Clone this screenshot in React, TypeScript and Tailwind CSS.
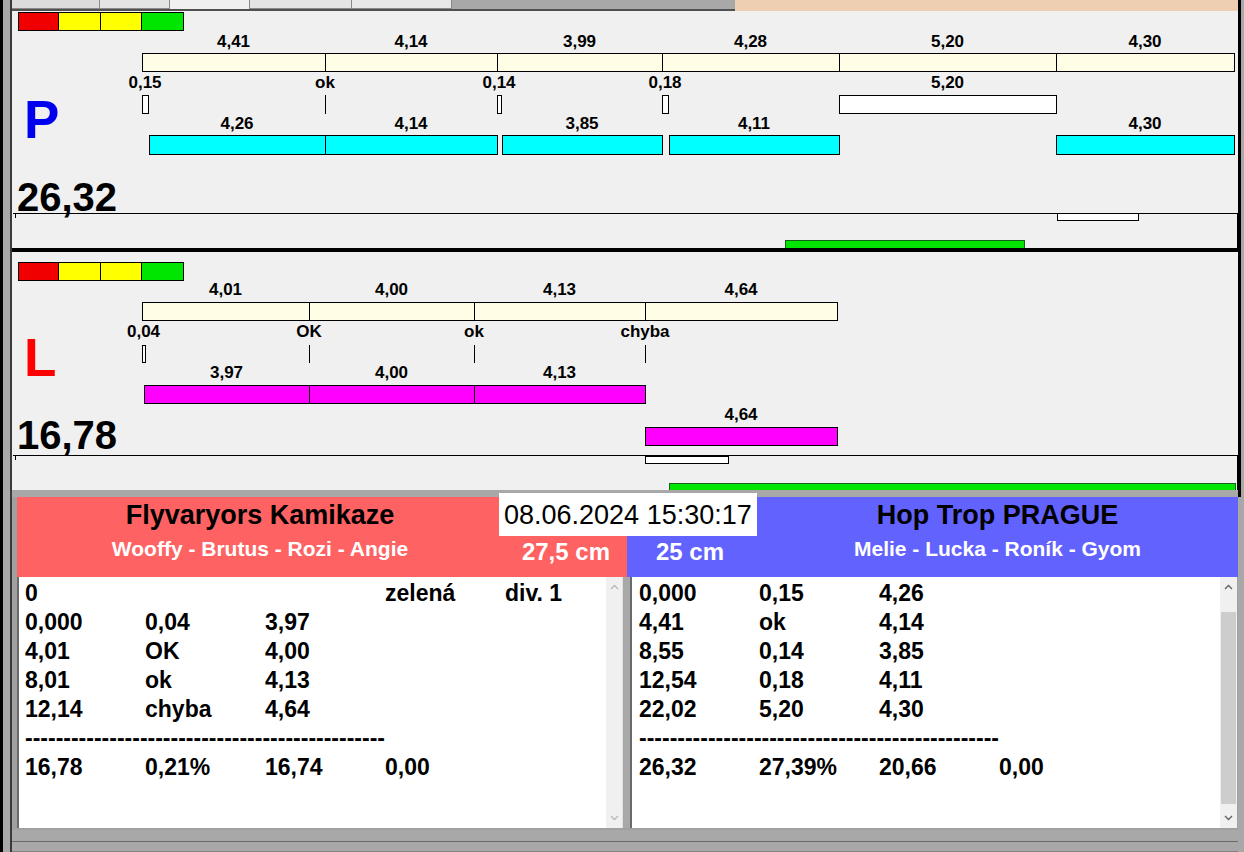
import React from 'react'

const OX = 12

type Mark = { x: number; w: number; label: string }
type Bar = { a: number; b: number; y: number; h: number; labelTop: number; label: string }
type Panel = {
  top: number
  height: number
  letter: string
  letterClass: string
  letterTop: number
  total: string
  totalTop: number
  lightTop: number
  base: { y: number; h: number; labelTop: number; cuts: number[]; labels: string[] }
  marks: { y: number; h: number; labelTop: number; items: Mark[] }
  bars: Bar[]
  barClass: string
  lineY: number
  white: [number, number, number]
  green: [number, number, number]
}

const panelP: Panel = {
  top: 11,
  height: 237,
  letter: 'P',
  letterClass: 'text-[#0000ee]',
  letterTop: 93,
  total: '26,32',
  totalTop: 177,
  lightTop: 12,
  base: {
    y: 53,
    h: 19,
    labelTop: 33,
    cuts: [142, 325, 497, 662, 839, 1056, 1234],
    labels: ['4,41', '4,14', '3,99', '4,28', '5,20', '4,30'],
  },
  marks: {
    y: 95,
    h: 19,
    labelTop: 74,
    items: [
      { x: 142, w: 6, label: '0,15' },
      { x: 325, w: 0, label: 'ok' },
      { x: 497, w: 4, label: '0,14' },
      { x: 662, w: 6, label: '0,18' },
      { x: 839, w: 217, label: '5,20' },
    ],
  },
  bars: [
    { a: 149, b: 325, y: 135, h: 20, labelTop: 115, label: '4,26' },
    { a: 325, b: 497, y: 135, h: 20, labelTop: 115, label: '4,14' },
    { a: 502, b: 662, y: 135, h: 20, labelTop: 115, label: '3,85' },
    { a: 669, b: 839, y: 135, h: 20, labelTop: 115, label: '4,11' },
    { a: 1056, b: 1234, y: 135, h: 20, labelTop: 115, label: '4,30' },
  ],
  barClass: 'bg-[#00ffff]',
  lineY: 213,
  white: [1057, 1139, 213],
  green: [785, 1025, 240],
}

const panelL: Panel = {
  top: 252,
  height: 238,
  letter: 'L',
  letterClass: 'text-[#ff0000]',
  letterTop: 331,
  total: '16,78',
  totalTop: 415,
  lightTop: 262,
  base: {
    y: 302,
    h: 19,
    labelTop: 281,
    cuts: [142, 309, 474, 645, 837],
    labels: ['4,01', '4,00', '4,13', '4,64'],
  },
  marks: {
    y: 345,
    h: 18,
    labelTop: 323,
    items: [
      { x: 142, w: 3, label: '0,04' },
      { x: 309, w: 0, label: 'OK' },
      { x: 474, w: 0, label: 'ok' },
      { x: 645, w: 0, label: 'chyba' },
    ],
  },
  bars: [
    { a: 144, b: 309, y: 385, h: 19, labelTop: 364, label: '3,97' },
    { a: 309, b: 474, y: 385, h: 19, labelTop: 364, label: '4,00' },
    { a: 474, b: 645, y: 385, h: 19, labelTop: 364, label: '4,13' },
    { a: 645, b: 837, y: 427, h: 19, labelTop: 406, label: '4,64' },
  ],
  barClass: 'bg-[#ff00ff]',
  lineY: 455,
  white: [645, 729, 456],
  green: [669, 1236, 483],
}

function Label({ cx, top, text }: { cx: number; top: number; text: string }) {
  return (
    <div
      className="absolute w-[100px] text-center text-[17px] font-bold leading-[17px] text-black"
      style={{ left: cx - 50 - OX, top }}
    >
      {text}
    </div>
  )
}

function Chart({ d }: { d: Panel }) {
  const t = d.top
  return (
    <div className="relative shrink-0 overflow-hidden bg-[#f0f0f0]" style={{ height: d.height }}>
      {/* semafor */}
      <div
        className="absolute flex h-[19px] border border-black"
        style={{ left: 18 - OX, top: d.lightTop - t }}
      >
        <div className="w-[40px] border-r border-black bg-[#f00000]" />
        <div className="w-[42px] border-r border-black bg-[#ffff00]" />
        <div className="w-[41px] border-r border-black bg-[#ffff00]" />
        <div className="w-[41px] bg-[#00e600]" />
      </div>

      {d.base.labels.map((l, i) => {
        const a = d.base.cuts[i]
        const b = d.base.cuts[i + 1]
        return (
          <React.Fragment key={'b' + i}>
            <Label cx={(a + b) / 2} top={d.base.labelTop - t} text={l} />
            <div
              className="absolute border border-black bg-[#fffde6]"
              style={{ left: a - OX, top: d.base.y - t, width: b - a + 1, height: d.base.h }}
            />
          </React.Fragment>
        )
      })}

      {d.marks.items.map((m, i) => (
        <React.Fragment key={'m' + i}>
          <Label cx={m.x + m.w / 2} top={d.marks.labelTop - t} text={m.label} />
          {m.w === 0 ? (
            <div
              className="absolute w-px bg-black"
              style={{ left: m.x - OX, top: d.marks.y - t, height: d.marks.h }}
            />
          ) : (
            <div
              className="absolute border border-black bg-white"
              style={{ left: m.x - OX, top: d.marks.y - t, width: m.w + 1, height: d.marks.h }}
            />
          )}
        </React.Fragment>
      ))}

      {d.bars.map((s, i) => (
        <React.Fragment key={'c' + i}>
          <Label cx={(s.a + s.b) / 2} top={s.labelTop - t} text={s.label} />
          <div
            className={'absolute border border-black ' + d.barClass}
            style={{ left: s.a - OX, top: s.y - t, width: s.b - s.a + 1, height: s.h }}
          />
        </React.Fragment>
      ))}

      <div
        className={'absolute text-[53px] font-bold leading-[53px] ' + d.letterClass}
        style={{ left: 24 - OX, top: d.letterTop - t }}
      >
        {d.letter}
      </div>
      <div
        className="absolute text-[40px] font-bold leading-[40px] text-black"
        style={{ left: 17 - OX, top: d.totalTop - t }}
      >
        {d.total}
      </div>

      {/* spodni pas */}
      <div
        className="absolute border-t border-r border-black"
        style={{ left: 13 - OX, top: d.lineY - t, width: 1238 - 13, height: d.height - (d.lineY - t) }}
      />
      <div
        className="absolute h-[5px] w-px bg-black"
        style={{ left: 15 - OX, top: d.lineY - t }}
      />
      <div
        className="absolute h-[8px] border border-black bg-white"
        style={{ left: d.white[0] - OX, top: d.white[2] - t, width: d.white[1] - d.white[0] }}
      />
      <div
        className="absolute h-[8px] border border-b-0 border-[#1b5e1b] bg-[#00e600]"
        style={{ left: d.green[0] - OX, top: d.green[2] - t, width: d.green[1] - d.green[0] }}
      />
    </div>
  )
}

function Chevron({ down, color }: { down?: boolean; color: string }) {
  return (
    <svg width="9" height="6" viewBox="0 0 9 6" className={color}>
      <path
        d={down ? 'M1 1 L4.5 4.5 L8 1' : 'M1 5 L4.5 1.5 L8 5'}
        fill="none"
        stroke="currentColor"
        strokeWidth="1.3"
      />
    </svg>
  )
}

const dashes = '-'.repeat(47)

type Row = string[]

const leftRows: Row[] = [
  ['0', '', '', 'zelená', 'div. 1'],
  ['0,000', '0,04', '3,97'],
  ['4,01', 'OK', '4,00'],
  ['8,01', 'ok', '4,13'],
  ['12,14', 'chyba', '4,64'],
]
const leftTotal: Row = ['16,78', '0,21%', '16,74', '0,00']

const rightRows: Row[] = [
  ['0,000', '0,15', '4,26'],
  ['4,41', 'ok', '4,14'],
  ['8,55', '0,14', '3,85'],
  ['12,54', '0,18', '4,11'],
  ['22,02', '5,20', '4,30'],
]
const rightTotal: Row = ['26,32', '27,39%', '20,66', '0,00']

function Lines({ rows, total }: { rows: Row[]; total: Row }) {
  const line = (r: Row, k: number) => (
    <div key={k} className="flex h-[29px] whitespace-nowrap">
      {[0, 1, 2, 3, 4].map((c) => (
        <div key={c} className="w-[120px] shrink-0">
          {r[c] ?? ''}
        </div>
      ))}
    </div>
  )
  return (
    <div className="text-[23px] font-bold leading-[29px] text-black">
      {rows.map(line)}
      <div className="h-[29px] whitespace-nowrap">{dashes}</div>
      {line(total, 99)}
    </div>
  )
}

export default function App() {
  return (
    <div className="flex h-[852px] w-[1244px] overflow-hidden bg-[#a0a0a0] font-['Liberation_Sans',Arial,sans-serif]">
      {/* levy okraj */}
      <div className="w-[12px] shrink-0 border-l-[3px] border-r-[2px] border-l-black border-r-[#3a3a3a] bg-[#a8a8a8]" />

      <div className="flex w-[1226px] shrink-0 flex-col">
        {/* horni lista */}
        <div className="flex h-[11px] shrink-0">
          <div className="flex w-[723px] border-b-2 border-[#505050] bg-[#a8a8a8]">
            <div className="w-[88px] border-r border-b border-[#8a8a8a] bg-[#dcdcdc]" />
            <div className="w-[70px] border-r border-b border-[#8a8a8a] bg-[#e4e4e4]" />
            <div className="w-[80px] border-r border-[#8a8a8a] bg-[#f0f0f0]" />
            <div className="w-[102px] border-r border-b border-[#8a8a8a] bg-[#e4e4e4]" />
            <div className="w-[100px] border-r border-b border-[#8a8a8a] bg-[#e8e8e8]" />
          </div>
          <div className="flex-1 bg-[#eecfb2]" />
        </div>

        <Chart d={panelP} />
        <div className="h-[4px] shrink-0 bg-black" />
        <Chart d={panelL} />
        <div className="h-[7px] shrink-0 bg-[#a8a8a8]" />

        {/* vysledky */}
        <div className="relative flex h-[333px] shrink-0 pl-[5px]">
          <div className="flex w-[610px] shrink-0 flex-col">
            <div className="flex h-[80px] shrink-0 bg-[#ff6262]">
              <div className="flex w-[486px] shrink-0 flex-col items-center pt-[3px]">
                <div className="text-[27px] font-bold leading-[30px] text-black">Flyvaryors Kamikaze</div>
                <div className="mt-[7px] text-[21px] font-bold leading-[24px] text-white">
                  Wooffy - Brutus - Rozi - Angie
                </div>
              </div>
              <div className="flex flex-1 items-start justify-end pt-[41px] pr-[17px]">
                <span className="text-[24px] font-bold leading-[28px] text-white">27,5 cm</span>
              </div>
            </div>
            <div className="flex h-[251px] shrink-0">
              <div className="w-[589px] shrink-0 border-l-2 border-[#6a6a6a] bg-white pt-[2px] pl-[6px]">
                <Lines rows={leftRows} total={leftTotal} />
              </div>
              <div className="flex w-[16px] shrink-0 flex-col items-center justify-between bg-[#f0f0f0] py-[7px]">
                <Chevron color="text-[#b8b8b8]" />
                <Chevron down color="text-[#b8b8b8]" />
              </div>
              <div className="w-[5px] shrink-0 border-l border-[#e0e0e0] bg-[#a8a8a8]" />
            </div>
          </div>

          <div className="flex w-[611px] shrink-0 flex-col">
            <div className="flex h-[80px] shrink-0 bg-[#6262ff]">
              <div className="flex w-[130px] shrink-0 items-start pt-[41px] pl-[29px]">
                <span className="text-[24px] font-bold leading-[28px] text-white">25 cm</span>
              </div>
              <div className="flex flex-1 flex-col items-center pt-[3px]">
                <div className="text-[27px] font-bold leading-[30px] text-black">Hop Trop PRAGUE</div>
                <div className="mt-[7px] text-[21px] font-bold leading-[24px] text-white">
                  Melie - Lucka - Roník - Gyom
                </div>
              </div>
            </div>
            <div className="flex h-[251px] shrink-0">
              <div className="w-[3px] shrink-0 bg-[#a8a8a8]" />
              <div className="w-[590px] shrink-0 border-l-2 border-[#6a6a6a] bg-white pt-[2px] pl-[7px]">
                <Lines rows={rightRows} total={rightTotal} />
              </div>
              <div className="flex w-[17px] shrink-0 flex-col items-center bg-[#f0f0f0] py-[7px]">
                <Chevron color="text-[#606060]" />
                <div className="mt-[22px] h-[192px] w-[15px] bg-[#cdcdcd]" />
                <div className="mt-auto">
                  <Chevron down color="text-[#606060]" />
                </div>
              </div>
            </div>
          </div>

          {/* datum */}
          <div className="absolute top-[-4px] left-[487px] flex h-[43px] w-[258px] items-center bg-white pl-[5px] text-[27px] leading-[30px] text-black">
            08.06.2024 15:30:17
          </div>
        </div>

        {/* spodni lista */}
        <div className="h-[22px] shrink-0 border-b border-[#808080] bg-[#a8a8a8] pt-[11px]">
          <div className="h-px bg-[#6a6a6a]" />
        </div>
      </div>

      {/* pravy okraj */}
      <div className="flex w-[6px] shrink-0 flex-col">
        <div className="h-[497px] border-l-[3px] border-black bg-[#a8a8a8]" />
        <div className="flex-1 bg-[#a8a8a8]" />
      </div>
    </div>
  )
}
